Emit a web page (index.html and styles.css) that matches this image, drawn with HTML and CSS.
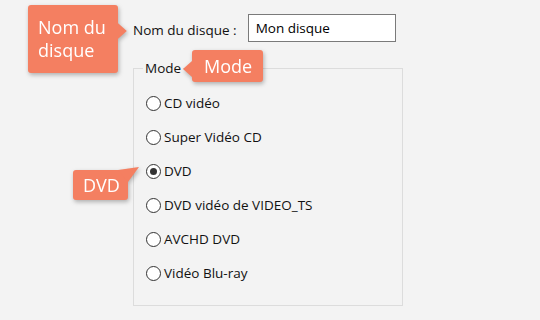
FILE: index.html
```html
<!DOCTYPE html>
<html lang="fr">
<head>
<meta charset="utf-8">
<title>Disque</title>
<link rel="stylesheet" href="styles.css">
</head>
<body>
<div class="dialog">
  <div class="row">
    <label class="label" for="nom">Nom du disque :</label>
    <input class="field" id="nom" type="text" value="Mon disque">
  </div>
  <fieldset class="group">
    <legend class="legend">Mode</legend>
    <div class="options">
      <div class="opt"><span class="radio"></span><span>CD vidéo</span></div>
      <div class="opt"><span class="radio"></span><span>Super Vidéo CD</span></div>
      <div class="opt"><span class="radio checked"></span><span>DVD</span></div>
      <div class="opt"><span class="radio"></span><span>DVD vidéo de VIDEO_TS</span></div>
      <div class="opt"><span class="radio"></span><span>AVCHD DVD</span></div>
      <div class="opt"><span class="radio"></span><span>Vidéo Blu-ray</span></div>
    </div>
  </fieldset>
</div>
<div class="callout callout-name">Nom du<br>disque</div>
<div class="callout callout-mode">Mode</div>
<div class="callout callout-dvd">DVD</div>
</body>
</html>
```
FILE: styles.css
```css
html, body {
  margin: 0;
  padding: 0;
  background: #f3f3f3;
  width: 540px;
  height: 320px;
  overflow: hidden;
  font-family: "Open Sans", "Noto Sans", sans-serif;
  color: #111;
}

.dialog {
  padding: 14px 0 0 133px;
}

.row {
  display: flex;
  align-items: center;
  gap: 11px;
}

.label {
  font-size: 13.5px;
  margin-top: 4px;
  color: #111;
}

.field {
  box-sizing: border-box;
  width: 148px;
  height: 28px;
  margin: 0;
  border: 1px solid #7a7a7a;
  background: #fff;
  padding: 0 0 1px 7px;
  font-family: "Open Sans", "Noto Sans", sans-serif;
  font-size: 13.5px;
  color: #000;
  outline: none;
}

.group {
  box-sizing: border-box;
  width: 270px;
  height: 247px;
  margin: 17px 0 0 0;
  padding: 0;
  border: 1px solid #dcdcdc;
  min-width: 0;
}

.legend {
  margin-left: 9px;
  padding: 0 2px;
  font-size: 13.5px;
  line-height: 18px;
  color: #111;
}

.options {
  padding: 9px 0 0 12px;
}

.opt {
  display: flex;
  align-items: center;
  gap: 3px;
  height: 34px;
  font-size: 13.5px;
  color: #111;
}

.radio {
  box-sizing: border-box;
  width: 15px;
  height: 15px;
  border: 1px solid #333;
  border-radius: 50%;
  background: #fff;
  display: flex;
  align-items: center;
  justify-content: center;
  flex: none;
}

.radio.checked::after {
  content: "";
  width: 7px;
  height: 7px;
  border-radius: 50%;
  background: #333;
}

.callout {
  position: absolute;
  background: #f47f61;
  color: #fff;
  font-family: "Open Sans", "Noto Sans", sans-serif;
  font-size: 18px;
  border-radius: 3px;
  filter: drop-shadow(1px 2px 2px rgba(0, 0, 0, 0.28));
}

.callout::after {
  content: "";
  position: absolute;
  background: #f47f61;
}

.callout-name {
  left: 28px;
  top: 5px;
  padding: 11px 12px 11px 10px;
  line-height: 23px;
}

.callout-name::after {
  left: 100%;
  top: 18px;
  width: 9px;
  height: 16px;
  clip-path: polygon(0 0, 100% 50%, 0 100%);
}

.callout-mode {
  left: 192px;
  top: 50px;
  padding: 4px 11px 4px 12px;
  line-height: 24px;
}

.callout-mode::after {
  right: 100%;
  top: 11px;
  width: 9px;
  height: 16px;
  clip-path: polygon(100% 0, 0 50%, 100% 100%);
}

.callout-dvd {
  left: 73px;
  top: 170px;
  padding: 3px 8px 3px 10px;
  line-height: 24px;
}

.callout-dvd::after {
  left: 45px;
  top: -3px;
  width: 21px;
  height: 15px;
  clip-path: polygon(0 20%, 47.6% 100%, 100% 0);
}
```
